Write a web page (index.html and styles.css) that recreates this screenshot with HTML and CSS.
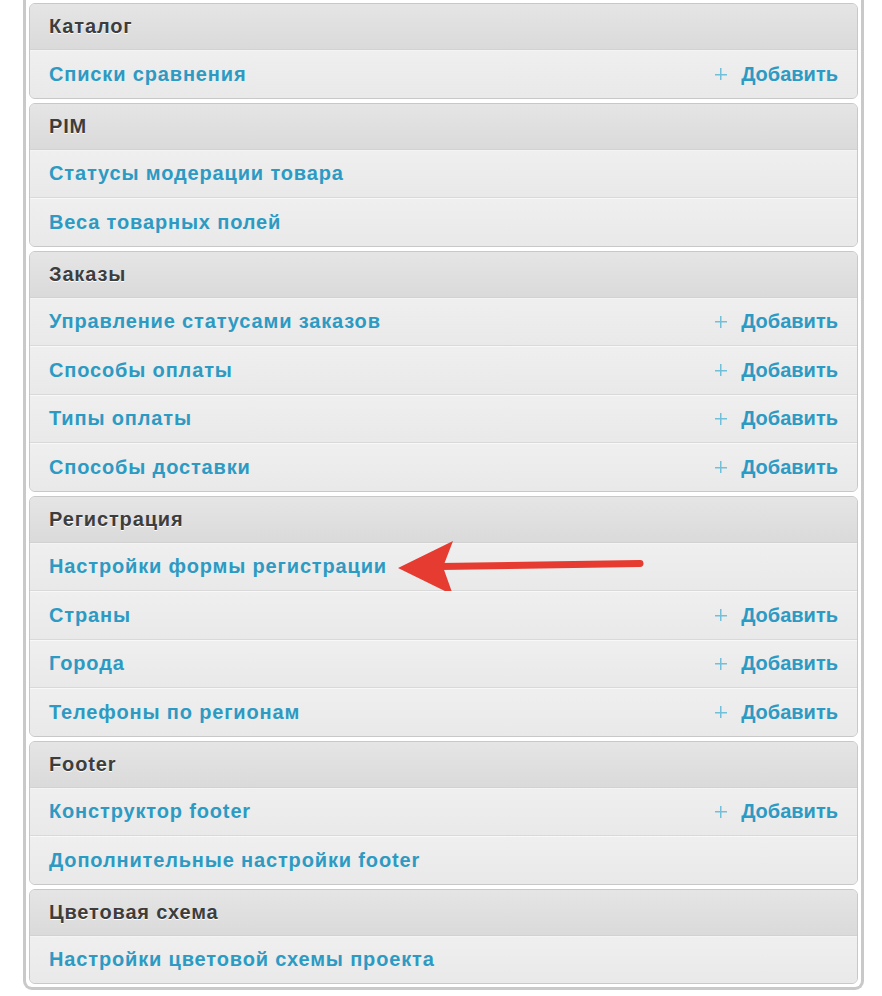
FILE: index.html
```html
<!DOCTYPE html>
<html lang="ru">
<head>
    <meta charset="UTF-8">
    <meta name="viewport" content="width=device-width, initial-scale=1.0">
    <title>Панель управления</title>
    <link rel="stylesheet" href="styles.css">
</head>
<body>
    <div class="dashboard">
        <div class="module">
            <div class="module-title">Каталог</div>
            <div class="module-row"><a href="#">Списки сравнения</a><a class="addlink" href="#">Добавить</a></div>
        </div>

        <div class="module">
            <div class="module-title">PIM</div>
            <div class="module-row"><a href="#">Статусы модерации товара</a></div>
            <div class="module-row"><a href="#">Веса товарных полей</a></div>
        </div>

        <div class="module">
            <div class="module-title">Заказы</div>
            <div class="module-row"><a href="#">Управление статусами заказов</a><a class="addlink" href="#">Добавить</a></div>
            <div class="module-row"><a href="#">Способы оплаты</a><a class="addlink" href="#">Добавить</a></div>
            <div class="module-row"><a href="#">Типы оплаты</a><a class="addlink" href="#">Добавить</a></div>
            <div class="module-row"><a href="#">Способы доставки</a><a class="addlink" href="#">Добавить</a></div>
        </div>

        <div class="module">
            <div class="module-title">Регистрация</div>
            <div class="module-row">
                <a href="#">Настройки формы регистрации</a>
                <svg class="pointer" width="250" height="60" viewBox="0 0 250 60">
                    <path d="M44 27.5 L243 24.5" stroke="#e53b30" stroke-width="7" stroke-linecap="round" fill="none"/>
                    <path d="M1 29 L56 2 L46 28 L56 56 Z" fill="#e53b30"/>
                </svg>
            </div>
            <div class="module-row"><a href="#">Страны</a><a class="addlink" href="#">Добавить</a></div>
            <div class="module-row"><a href="#">Города</a><a class="addlink" href="#">Добавить</a></div>
            <div class="module-row"><a href="#">Телефоны по регионам</a><a class="addlink" href="#">Добавить</a></div>
        </div>

        <div class="module">
            <div class="module-title">Footer</div>
            <div class="module-row"><a href="#">Конструктор footer</a><a class="addlink" href="#">Добавить</a></div>
            <div class="module-row"><a href="#">Дополнительные настройки footer</a></div>
        </div>

        <div class="module">
            <div class="module-title">Цветовая схема</div>
            <div class="module-row"><a href="#">Настройки цветовой схемы проекта</a></div>
        </div>
    </div>
</body>
</html>
```

FILE: styles.css
```css
body {
    margin: 0;
    font-family: "Liberation Sans", Arial, sans-serif;
    background-color: #fff;
}
.dashboard {
    width: 841px;
    box-sizing: border-box;
    margin: 0 0 0 23px;
    padding: 3px 3px 3px 3px;
    border: 3px solid #c9c9c9;
    border-top: none;
    border-radius: 0 0 9px 9px;
}
.module {
    margin-bottom: 4px;
    border: 1px solid #c8c8c8;
    border-radius: 6px;
    background-color: #ededed;
    overflow: hidden;
}
.module:last-child {
    margin-bottom: 0;
}
.module-title {
    height: 45px;
    display: flex;
    align-items: center;
    padding: 0 19px;
    border-bottom: 1px solid #d2d2d2;
    background: linear-gradient(#e5e5e5, #dadada);
    color: #3d3d3d;
    font-size: 20px;
    font-weight: bold;
    letter-spacing: 0.85px;
    text-shadow: 0 1px 0 #fff;
}
.module-row {
    position: relative;
    display: flex;
    align-items: center;
    justify-content: space-between;
    padding: 0 19px;
    border-top: 1px solid #f8f8f8;
    border-bottom: 1px solid #d9d9d9;
    box-sizing: border-box;
    height: 48.5px;
    background: linear-gradient(#efefef, #e9e9e9);
}
.module-title + .module-row {
    border-top-color: #f4f4f4;
}
.module-row:last-child {
    border-bottom: none;
    height: 47.5px;
}
.module-row a {
    color: #2c9ac3;
    font-size: 20px;
    font-weight: bold;
    letter-spacing: 0.85px;
    text-decoration: none;
}
.module-row a.addlink {
    display: flex;
    align-items: center;
    letter-spacing: 0;
}
.module-row a.addlink::before {
    content: "";
    width: 12px;
    height: 12px;
    margin-right: 14px;
    background:
        linear-gradient(#72bfd9, #72bfd9) center / 12px 1.5px no-repeat,
        linear-gradient(#72bfd9, #72bfd9) center / 1.5px 12px no-repeat;
}
.pointer {
    position: absolute;
    left: 367px;
    top: -5px;
}
```
